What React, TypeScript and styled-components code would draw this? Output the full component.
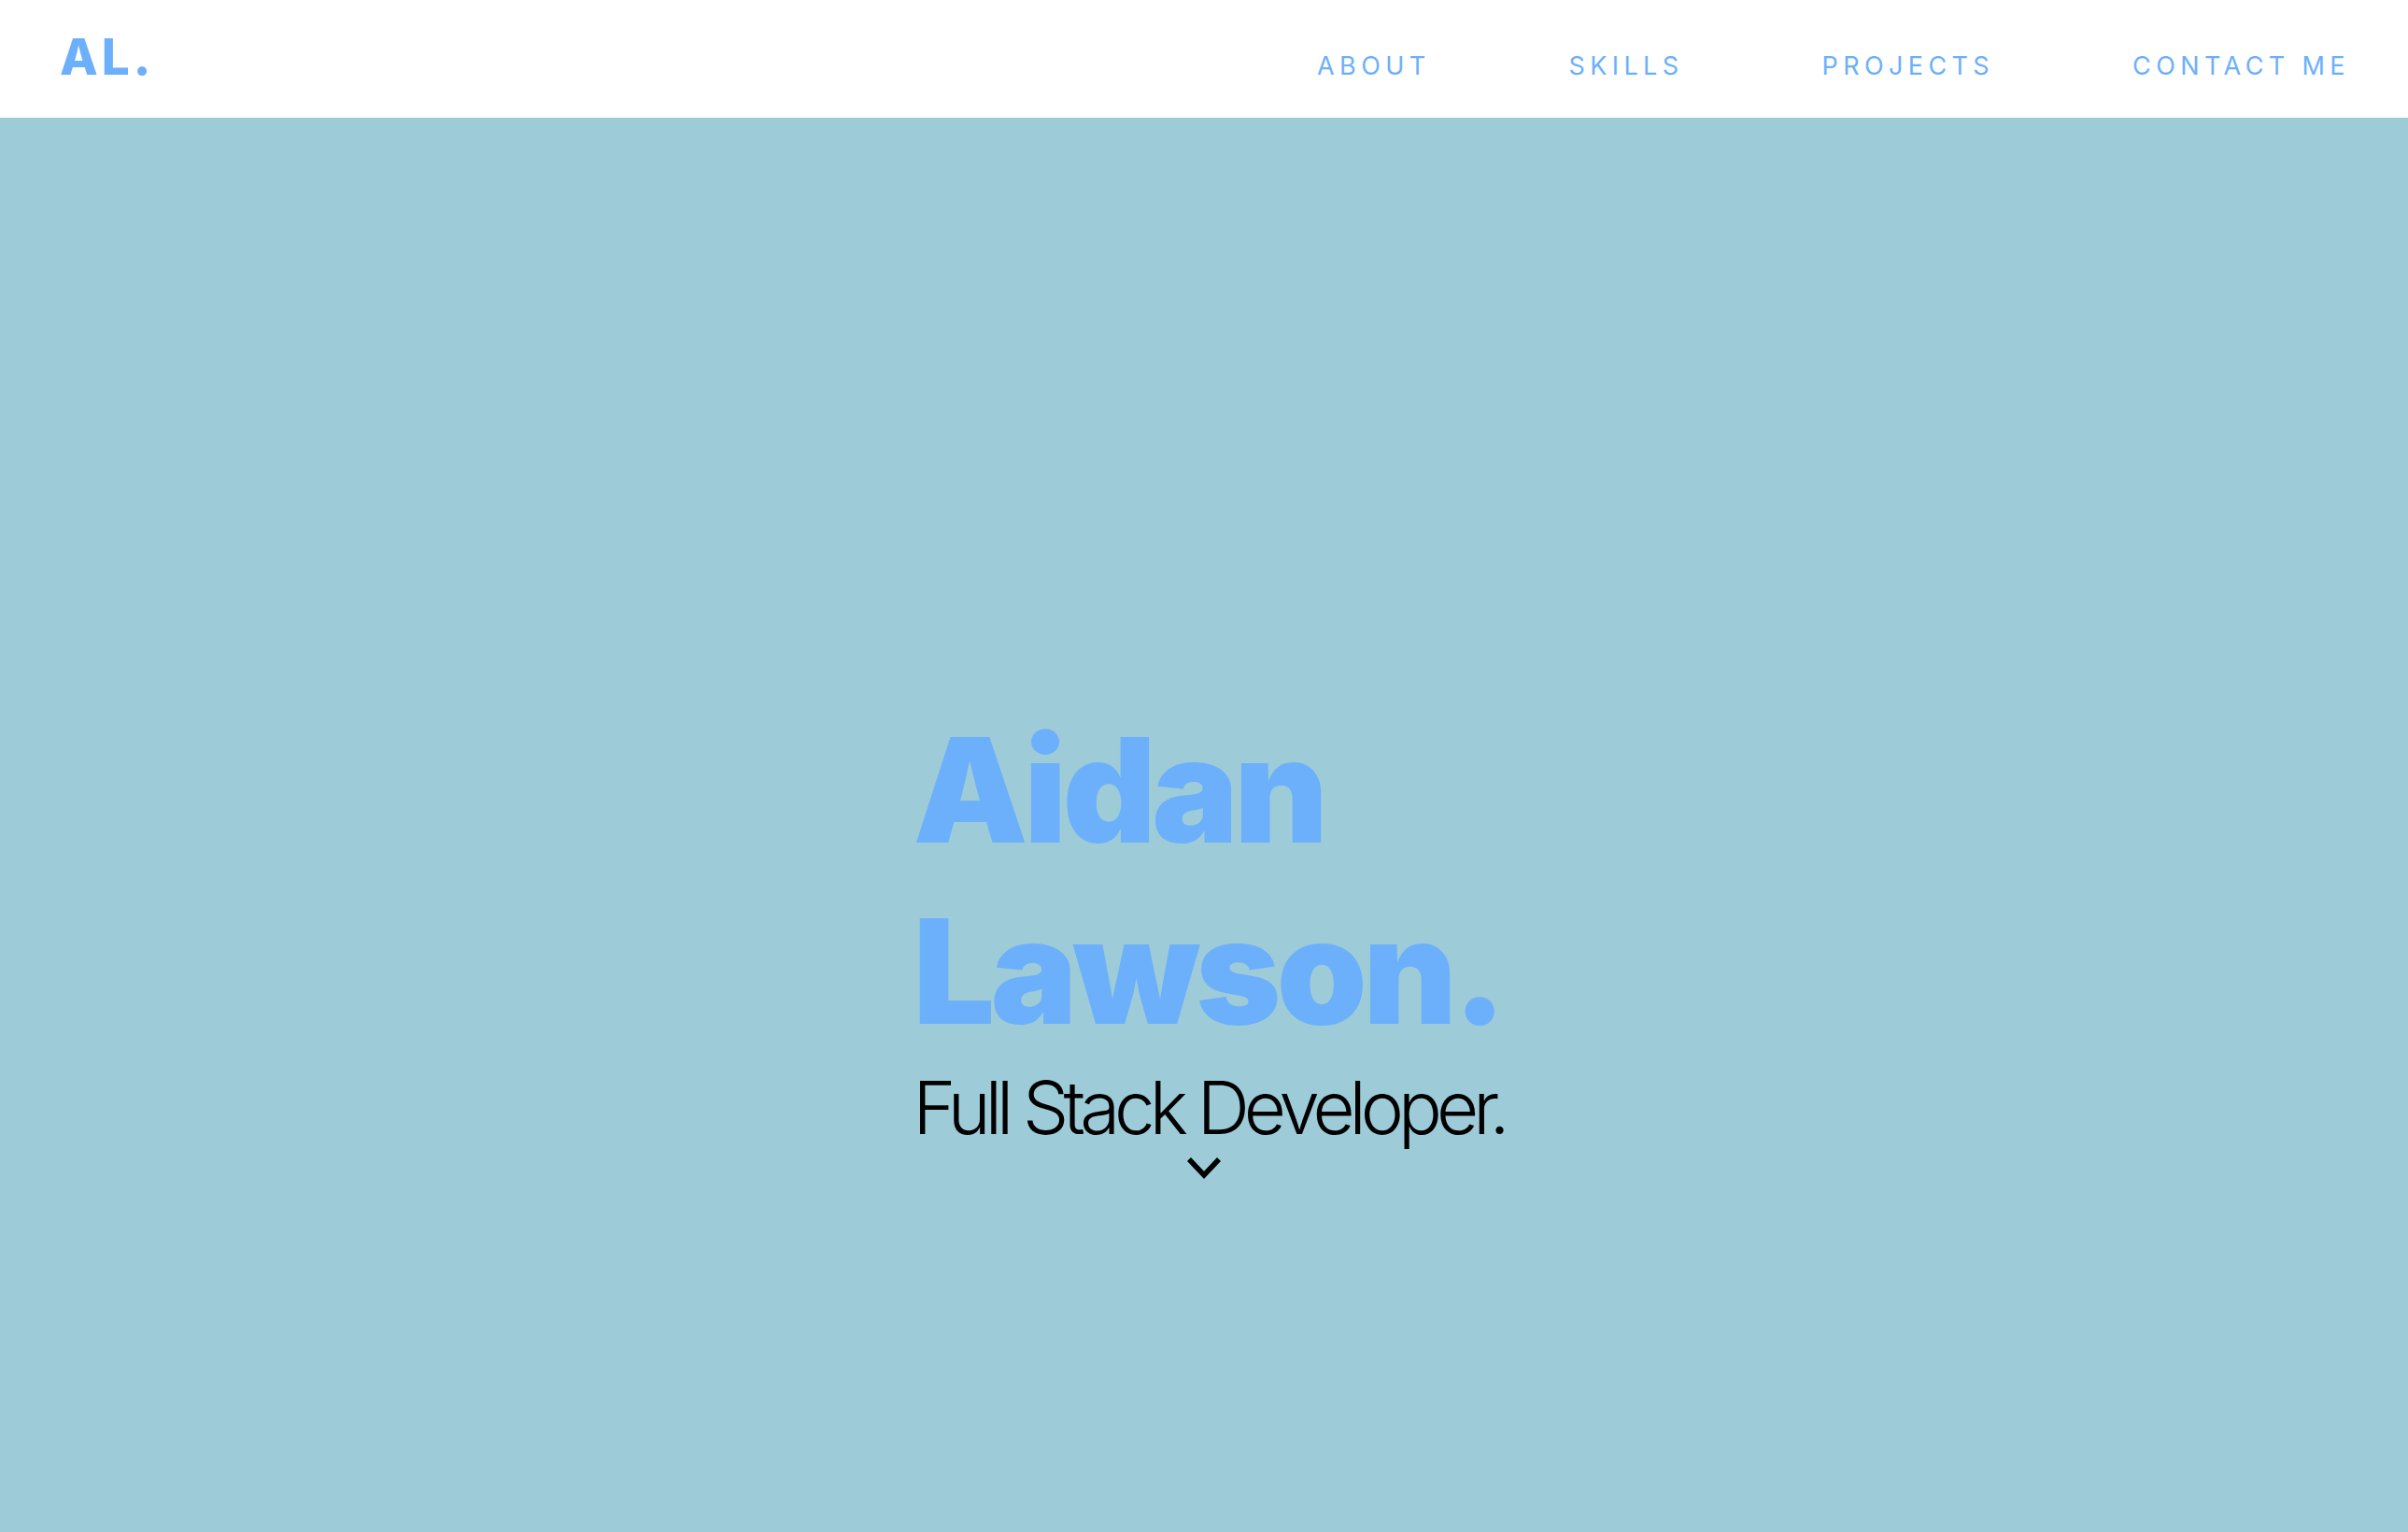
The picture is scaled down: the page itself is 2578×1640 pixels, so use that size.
import React from "react";
import styled, { createGlobalStyle } from "styled-components";

const GlobalStyle = createGlobalStyle`
  html, body {
    margin: 0;
    padding: 0;
    background: #9dcbd8;
  }
  body {
    font-family: Inter, "Open Sans", "Liberation Sans", sans-serif;
  }
  #root {
    min-height: 100vh;
  }
`;

const Page = styled.div`
  min-height: 100vh;
  display: flex;
  flex-direction: column;
`;

const Header = styled.header`
  box-sizing: border-box;
  height: 126px;
  padding: 35px 62px 0 64px;
  background: #ffffff;
  display: flex;
  align-items: baseline;
  justify-content: space-between;
`;

const Logo = styled.a`
  font-family: Inter, sans-serif;
  font-weight: 800;
  font-size: 53px;
  line-height: 1;
  letter-spacing: 4px;
  color: #6cb0fb;
  text-decoration: none;
`;

const Nav = styled.nav`
  display: flex;
  align-items: baseline;
  gap: 148px;
`;

const NavLink = styled.a`
  font-family: Inter, sans-serif;
  font-weight: 400;
  font-size: 27px;
  line-height: 1;
  letter-spacing: 5.4px;
  color: #6cb0fb;
  text-decoration: none;
  text-transform: uppercase;
`;

const Hero = styled.main`
  flex: 1;
  background: #9dcbd8;
  display: flex;
  flex-direction: column;
  align-items: center;
  padding-top: 623px;
`;

const Intro = styled.div`
  display: flex;
  flex-direction: column;
  align-items: flex-start;
  margin-left: 10px;
`;

const Name = styled.h1`
  margin: 0;
  font-family: Inter, sans-serif;
  font-weight: 900;
  font-size: 155px;
  line-height: 194px;
  letter-spacing: -4.5px;
  color: #6cb0fb;
`;

const NameLine = styled.span`
  display: block;
`;

const Role = styled.p`
  margin: 10px 0 0;
  font-family: Inter, sans-serif;
  font-weight: 300;
  font-size: 78px;
  line-height: 1;
  letter-spacing: -6px;
  color: #000000;
`;

const ScrollCue = styled.a`
  align-self: center;
  margin: 12px 10px 0 0;
  display: flex;
  color: #000;
`;

const Chevron = () => (
  <svg width="40" height="26" viewBox="0 0 40 26" fill="none">
    <polyline
      points="4,4 20,21 36,4"
      stroke="currentColor"
      strokeWidth="5.5"
      strokeLinecap="butt"
      strokeLinejoin="miter"
    />
  </svg>
);

const links = ["About", "Skills", "Projects", "Contact Me"];

export default function App() {
  return (
    <>
      <GlobalStyle />
      <Page>
        <Header>
          <Logo href="#">AL.</Logo>
          <Nav>
            {links.map((l) => (
              <NavLink key={l} href="#">
                {l}
              </NavLink>
            ))}
          </Nav>
        </Header>
        <Hero>
          <Intro>
            <Name>
              <NameLine>Aidan</NameLine>
              <NameLine>Lawson.</NameLine>
            </Name>
            <Role>Full Stack Developer.</Role>
            <ScrollCue href="#about">
              <Chevron />
            </ScrollCue>
          </Intro>
        </Hero>
      </Page>
    </>
  );
}
